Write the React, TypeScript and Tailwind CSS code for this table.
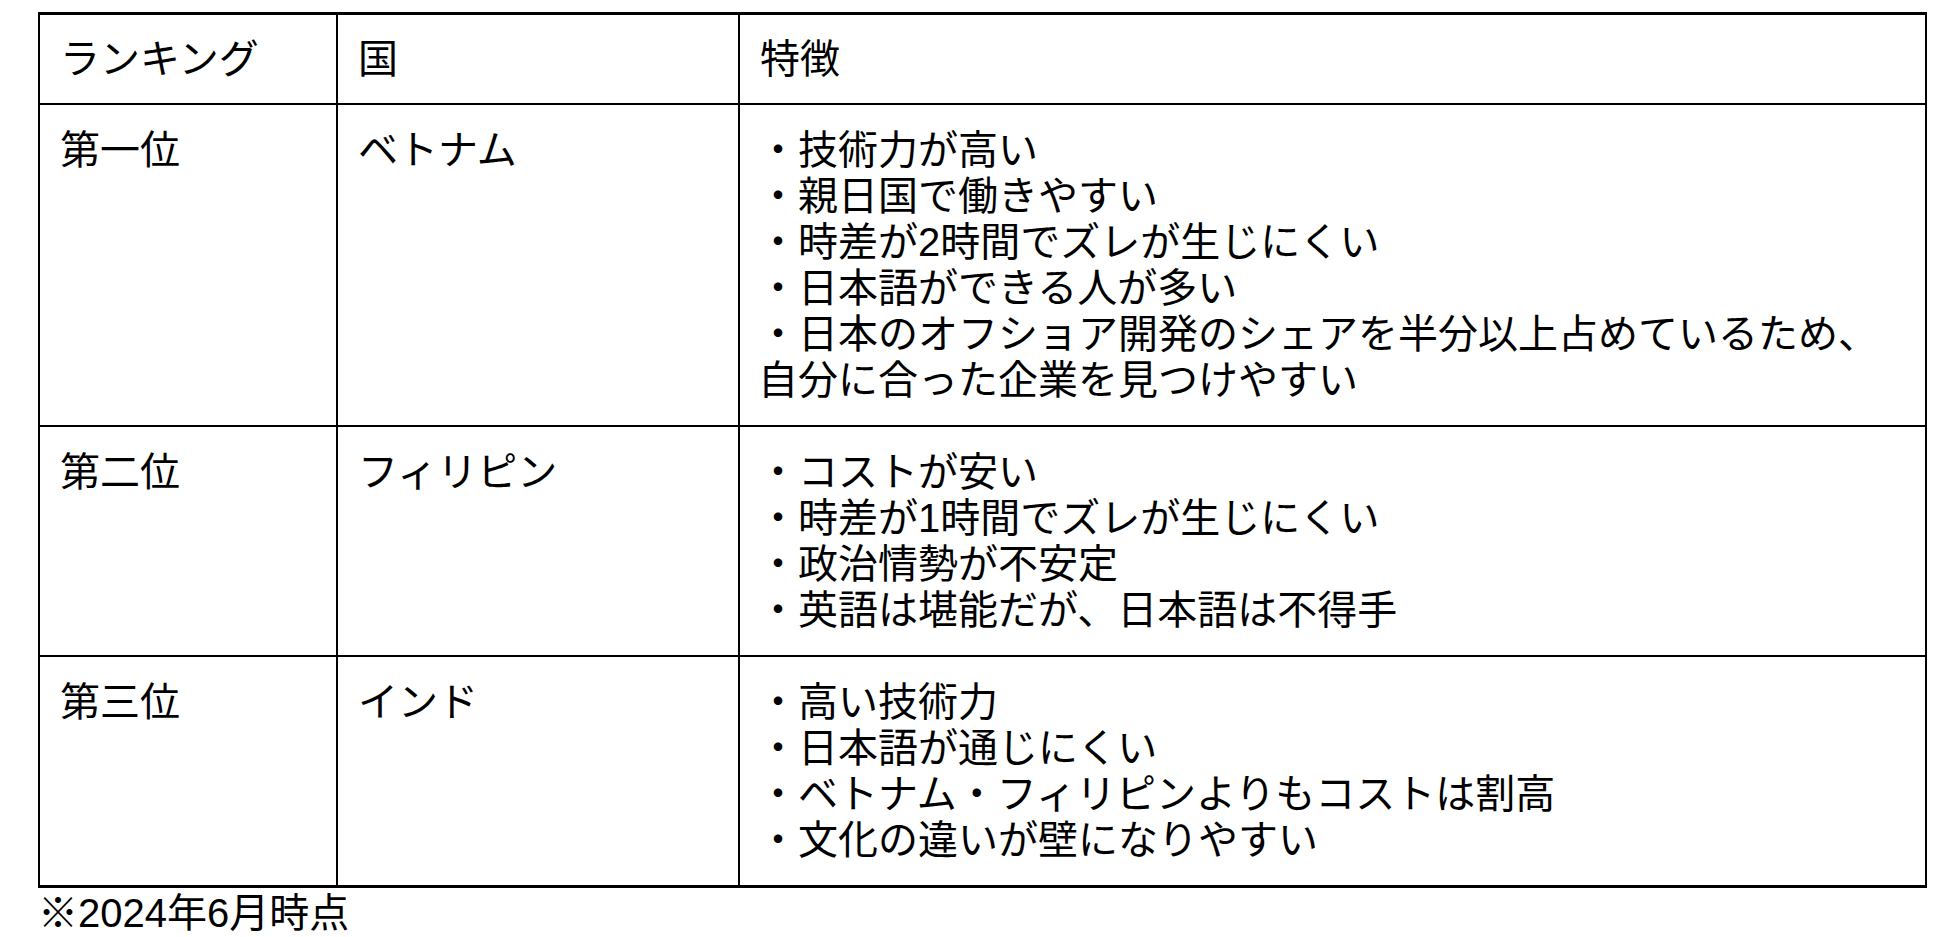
const rows = [
  {
    rank: '第一位',
    country: 'ベトナム',
    lines: [
      '・技術力が高い',
      '・親日国で働きやすい',
      '・時差が2時間でズレが生じにくい',
      '・日本語ができる人が多い',
      '・日本のオフショア開発のシェアを半分以上占めているため、',
      '自分に合った企業を見つけやすい',
    ],
  },
  {
    rank: '第二位',
    country: 'フィリピン',
    lines: [
      '・コストが安い',
      '・時差が1時間でズレが生じにくい',
      '・政治情勢が不安定',
      '・英語は堪能だが、日本語は不得手',
    ],
  },
  {
    rank: '第三位',
    country: 'インド',
    lines: [
      '・高い技術力',
      '・日本語が通じにくい',
      '・ベトナム・フィリピンよりもコストは割高',
      '・文化の違いが壁になりやすい',
    ],
  },
]

export default function App() {
  return (
    <div className="min-h-screen bg-white text-black pt-[12px] pl-[38px] font-['Liberation_Sans','Noto_Sans_CJK_JP',sans-serif] text-[40px] leading-[46px]">
      <div className="w-[1889px] border-x-2 border-t-[3px] border-b-[3px] border-black">
        <div className="grid grid-cols-[298px_402px_1fr] border-b-2 border-black">
          <div className="px-[20px] py-[21px] border-r-2 border-black">ランキング</div>
          <div className="px-[20px] py-[21px] border-r-2 border-black">国</div>
          <div className="px-[20px] py-[21px]">特徴</div>
        </div>
        {rows.map((row, i) => (
          <div
            key={row.rank}
            className={
              i < rows.length - 1
                ? 'grid grid-cols-[298px_402px_1fr] border-b-2 border-black'
                : 'grid grid-cols-[298px_402px_1fr]'
            }
          >
            <div className="px-[20px] py-[22px] border-r-2 border-black">{row.rank}</div>
            <div className="px-[20px] py-[22px] border-r-2 border-black">{row.country}</div>
            <div className="px-[18px] py-[22px] whitespace-nowrap">
              {row.lines.map((line) => (
                <div key={line}>{line}</div>
              ))}
            </div>
          </div>
        ))}
      </div>
      <p className="mt-[2px]">※2024年6月時点</p>
    </div>
  )
}
